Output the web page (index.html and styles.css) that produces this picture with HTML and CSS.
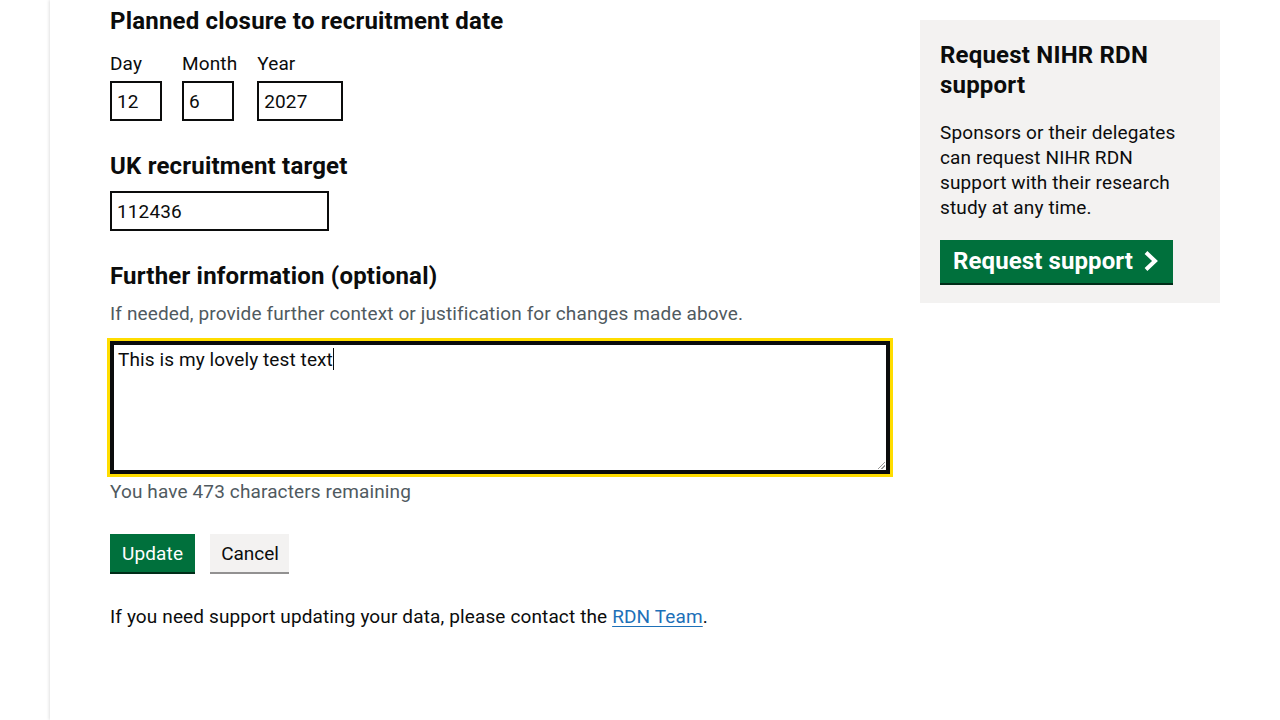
FILE: index.html
```html
<!DOCTYPE html>
<html lang="en">
<head>
<meta charset="utf-8">
<title>Update study data</title>
<link rel="stylesheet" href="styles.css">
</head>
<body>
<div class="page">
  <div class="layout">
    <main class="main">
      <fieldset class="fieldset form-group">
        <legend class="legend">Planned closure to recruitment date</legend>
        <div class="date-input">
          <div class="date-item">
            <label class="label" for="day">Day</label>
            <input class="input w-day" id="day" type="text" value="12">
          </div>
          <div class="date-item">
            <label class="label" for="month">Month</label>
            <input class="input w-day" id="month" type="text" value="6">
          </div>
          <div class="date-item">
            <label class="label" for="year">Year</label>
            <input class="input w-year" id="year" type="text" value="2027">
          </div>
        </div>
      </fieldset>

      <div class="form-group">
        <label class="label-m" for="target">UK recruitment target</label>
        <input class="input w-target" id="target" type="text" value="112436">
      </div>

      <div class="form-group">
        <label class="label-m" for="info">Further information (optional)</label>
        <div class="hint">If needed, provide further context or justification for changes made above.</div>
        <div class="textarea-wrap">
          <div class="textarea" id="info">This is my lovely test text<span class="caret"></span><span class="grip"></span></div>
        </div>
        <div class="hint count">You have 473 characters remaining</div>
      </div>

      <div class="buttons">
        <button class="btn btn-primary" type="button">Update</button>
        <button class="btn btn-secondary" type="button">Cancel</button>
      </div>

      <p class="body">If you need support updating your data, please contact the <a class="link" href="#">RDN Team</a>.</p>
    </main>

    <aside class="sidebar">
      <h2 class="side-heading">Request NIHR RDN support</h2>
      <p class="side-body">Sponsors or their delegates can request NIHR RDN support with their research study at any time.</p>
      <a class="btn-start" href="#">Request support
        <svg class="chev" width="18" height="22" viewBox="0 0 18 22" aria-hidden="true"><path d="M4 2.5 L13 11 L4 19.5" fill="none" stroke="#fff" stroke-width="4" stroke-linejoin="miter"/></svg>
      </a>
    </aside>
  </div>
</div>
</body>
</html>
```

FILE: styles.css
```css
* { box-sizing: border-box; }

html, body {
  margin: 0;
  padding: 0;
  background: #fff;
  font-family: Roboto, "Liberation Sans", Arial, sans-serif;
  color: #0b0c0c;
  -webkit-font-smoothing: antialiased;
}

.page {
  margin-left: 50px;
  min-height: 720px;
  background: #fff;
  box-shadow: -1px 0 3px rgba(0, 0, 0, 0.12);
  padding: 0 60px;
}

.layout {
  display: flex;
  align-items: flex-start;
  gap: 30px;
}

.main {
  width: 780px;
  flex: 0 0 780px;
  padding-top: 6px;
}

.fieldset {
  border: 0;
  margin: 0;
  padding: 0;
  min-width: 0;
}

.form-group {
  margin-bottom: 30px;
}

.legend {
  padding: 0;
  font-size: 24px;
  line-height: 30px;
  font-weight: 700;
  letter-spacing: 0.2px;
  margin-bottom: 15px;
}

.date-input {
  display: flex;
}

.date-item {
  display: flex;
  flex-direction: column;
  align-items: flex-start;
  margin-right: 20px;
}

.label {
  display: block;
  font-size: 19px;
  line-height: 25px;
  letter-spacing: 0.13px;
  margin-bottom: 5px;
}

.label-m {
  display: block;
  font-size: 24px;
  line-height: 30px;
  font-weight: 700;
  letter-spacing: 0.2px;
  margin-bottom: 10px;
}

.input {
  display: block;
  height: 40px;
  border: 2px solid #0b0c0c;
  border-radius: 0;
  padding: 5px;
  font-family: inherit;
  font-size: 19px;
  line-height: 25px;
  letter-spacing: 0.13px;
  color: #0b0c0c;
  background: #fff;
  margin: 0;
}

.w-day { width: 52px; }
.w-year { width: 86px; }
.w-target { width: 219px; }

.hint {
  font-size: 19px;
  line-height: 25px;
  letter-spacing: 0.13px;
  color: #505a5f;
  margin-bottom: 15px;
}

.textarea-wrap {
  margin-bottom: 5px;
}

.textarea {
  position: relative;
  width: 780px;
  height: 133px;
  border: 2px solid #0b0c0c;
  box-shadow: inset 0 0 0 2px #0b0c0c;
  outline: 3px solid #ffdd00;
  outline-offset: 0;
  padding: 4px 5px 5px 6px;
  font-size: 19px;
  line-height: 25px;
  letter-spacing: 0.1px;
  color: #0b0c0c;
  background: #fff;
}

.caret {
  display: inline-block;
  width: 1px;
  height: 22px;
  background: #0b0c0c;
  vertical-align: -4px;
}

.grip {
  position: absolute;
  right: 3px;
  bottom: 3px;
  width: 7px;
  height: 7px;
  background: linear-gradient(135deg, transparent 45%, #999 45%, #999 55%, transparent 55%, transparent 70%, #999 70%, #999 80%, transparent 80%);
}

.count {
  margin-bottom: 0;
}

.buttons {
  display: flex;
  gap: 15px;
  margin-bottom: 32px;
}

.btn {
  font-family: inherit;
  font-size: 19px;
  line-height: 19px;
  letter-spacing: 0.13px;
  padding: 8px 10px 7px;
  border: 2px solid transparent;
  border-radius: 0;
  margin: 0;
  cursor: pointer;
}

.btn-primary {
  background: #00703c;
  color: #fff;
  box-shadow: 0 2px 0 #002d18;
}

.btn-secondary {
  background: #f3f2f1;
  color: #0b0c0c;
  box-shadow: 0 2px 0 #929191;
  padding: 8px 8px 7px 9px;
  letter-spacing: 0;
}

.body {
  margin: 0;
  font-size: 19px;
  line-height: 25px;
  letter-spacing: 0.13px;
}

.link {
  color: #1d70b8;
  text-decoration: underline;
  text-underline-offset: 3px;
  text-decoration-thickness: 1px;
}

.sidebar {
  flex: 0 0 300px;
  width: 300px;
  margin-top: 20px;
  background: #f3f2f1;
  padding: 20px 20px 20px;
}

.side-heading {
  margin: 0 0 20px;
  font-size: 24px;
  line-height: 30px;
  font-weight: 700;
  letter-spacing: 0.2px;
}

.side-body {
  margin: 0 0 20px;
  font-size: 19px;
  line-height: 25px;
  letter-spacing: 0.13px;
  padding-right: 10px;
}

.btn-start {
  display: inline-flex;
  align-items: center;
  gap: 9px;
  background: #00703c;
  color: #fff;
  font-size: 24px;
  font-weight: 700;
  line-height: 24px;
  letter-spacing: 0.1px;
  padding: 8px 12px 9px 12px;
  border: 1px solid transparent;
  text-decoration: none;
  box-shadow: 0 2px 0 #002d18;
}

.chev {
  display: block;
}
```
